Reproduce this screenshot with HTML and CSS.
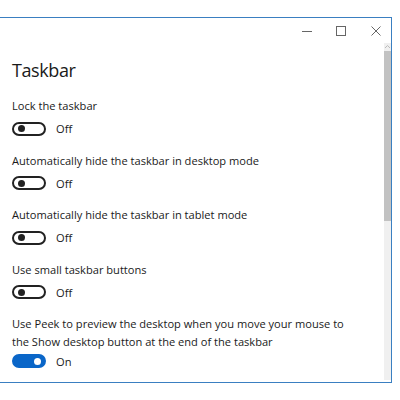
FILE: index.html
```html
<!DOCTYPE html>
<html lang="en">
  <head>
    <meta charset="UTF-8" />
    <meta name="viewport" content="width=device-width, initial-scale=1.0" />
    <title>Taskbar settings</title>
    <link rel="stylesheet" href="styles.css">
  </head>
  <body>
    <div class="window">
      <div class="titlebar">
        <span class="caption-btn min">
          <svg width="10" height="10" viewBox="0 0 10 10"><path d="M0 5.5h10" stroke="#666" stroke-width="1" /></svg>
        </span>
        <span class="caption-btn max">
          <svg width="10" height="10" viewBox="0 0 10 10"><rect x="0.5" y="0.5" width="9" height="9" fill="none" stroke="#666" stroke-width="1" /></svg>
        </span>
        <span class="caption-btn close">
          <svg width="10" height="10" viewBox="0 0 10 10"><path d="M0.5 0.5l9 9M9.5 0.5l-9 9" stroke="#666" stroke-width="1" /></svg>
        </span>
      </div>

      <div class="main">
        <div class="content">
          <h1 class="title">Taskbar</h1>

          <div class="setting">
            <p class="label">Lock the taskbar</p>
            <div class="toggle-row">
              <span class="toggle"><span class="knob"></span></span>
              <span class="state">Off</span>
            </div>
          </div>

          <div class="setting">
            <p class="label">Automatically hide the taskbar in desktop mode</p>
            <div class="toggle-row">
              <span class="toggle"><span class="knob"></span></span>
              <span class="state">Off</span>
            </div>
          </div>

          <div class="setting">
            <p class="label">Automatically hide the taskbar in tablet mode</p>
            <div class="toggle-row">
              <span class="toggle"><span class="knob"></span></span>
              <span class="state">Off</span>
            </div>
          </div>

          <div class="setting">
            <p class="label">Use small taskbar buttons</p>
            <div class="toggle-row">
              <span class="toggle"><span class="knob"></span></span>
              <span class="state">Off</span>
            </div>
          </div>

          <div class="setting">
            <p class="label">Use Peek to preview the desktop when you move your mouse to the Show desktop button at the end of the taskbar</p>
            <div class="toggle-row tight">
              <span class="toggle on"><span class="knob"></span></span>
              <span class="state">On</span>
            </div>
          </div>
        </div>

        <div class="scrollbar">
          <svg class="arrow" width="7" height="5" viewBox="0 0 7 5"><path d="M1 4l2.5-2.5L6 4" fill="none" stroke="#bbb" stroke-width="1" /></svg>
          <div class="thumb"></div>
        </div>
      </div>
    </div>
  </body>
</html>
```

FILE: styles.css
```css
* {
  padding: 0px;
  margin: 0px;
  box-sizing: border-box;
}

body {
  background-color: #fff;
  font-family: "Open Sans", "Noto Sans", sans-serif;
  color: #1a1a1a;
}

.window {
  margin-top: 17px;
  width: 392px;
  height: 366px;
  border-top: 1px solid #3a7fc1;
  border-right: 1px solid #3a7fc1;
  border-bottom: 1px solid #3a7fc1;
  display: flex;
  flex-direction: column;
}

.titlebar {
  height: 25px;
  display: flex;
  justify-content: flex-end;
  align-items: center;
}

.caption-btn {
  height: 25px;
  display: flex;
  align-items: center;
  justify-content: center;
}

.caption-btn.min {
  width: 30px;
}

.caption-btn.max {
  width: 38px;
}

.caption-btn.close {
  width: 31px;
}

.main {
  flex: 1;
  display: flex;
  min-height: 0;
}

.content {
  flex: 1;
  padding: 14px 0 0 12px;
  display: flex;
  flex-direction: column;
  gap: 16px;
}

.title {
  font-size: 18px;
  font-weight: 400;
  letter-spacing: -0.4px;
  line-height: 26px;
  margin-bottom: -2px;
}

.label {
  font-size: 11.1px;
  line-height: 17.5px;
  max-width: 345px;
}

.toggle-row {
  margin-top: 7px;
  display: flex;
  align-items: center;
  gap: 10px;
  height: 14px;
}

.toggle-row.tight {
  margin-top: 4px;
}

.toggle {
  width: 34px;
  height: 14px;
  border: 2px solid #222;
  border-radius: 7px;
  display: flex;
  align-items: center;
  padding-left: 4px;
}

.knob {
  width: 7px;
  height: 7px;
  border-radius: 50%;
  background-color: #222;
}

.toggle.on {
  background-color: #0a66c8;
  border-color: #0a66c8;
  justify-content: flex-end;
  padding-left: 0;
  padding-right: 3px;
}

.toggle.on .knob {
  background-color: #fff;
}

.state {
  font-size: 11.1px;
}

.scrollbar {
  width: 7px;
  margin-bottom: 2px;
  background-color: #f0f0f0;
  display: flex;
  flex-direction: column;
  align-items: center;
}

.arrow {
  margin-top: 1px;
}

.thumb {
  margin-top: 2px;
  width: 7px;
  height: 170px;
  background-color: #c2c2c2;
}
```
